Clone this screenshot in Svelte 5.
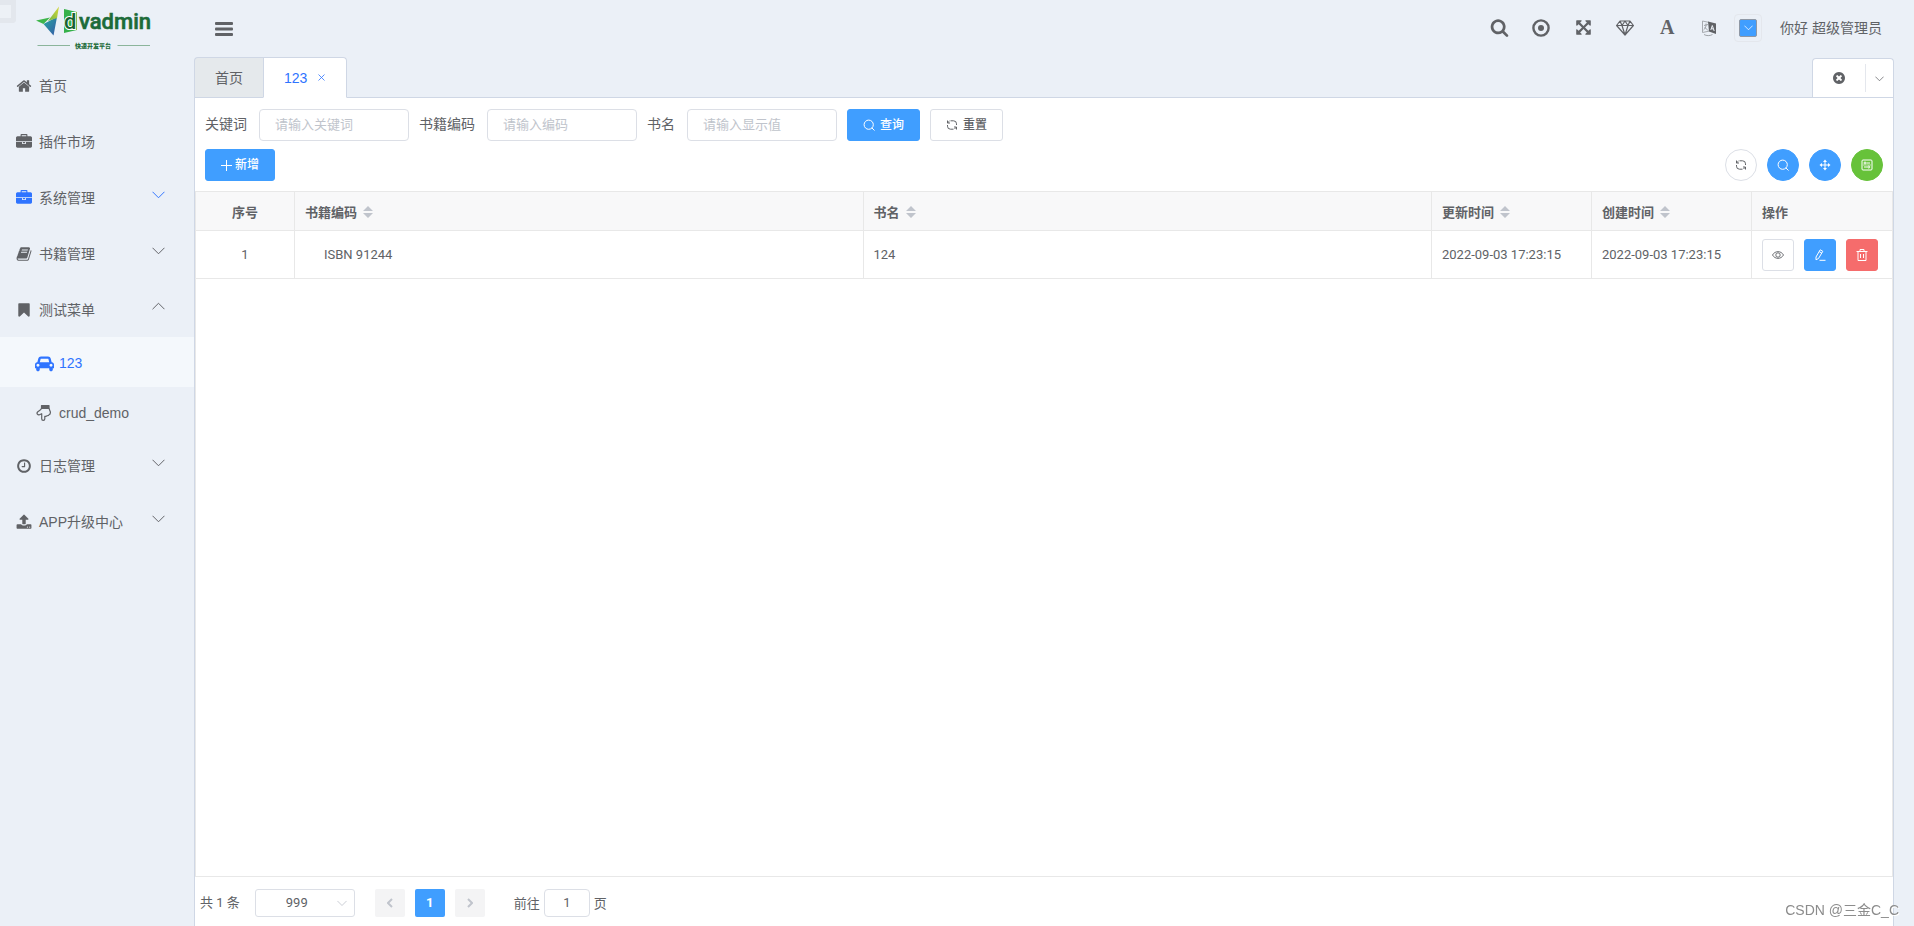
<script>
  const icons = {
    home: 'M1472 992v480q0 26-19 45t-45 19h-384v-384h-256v384h-384q-26 0-45-19t-19-45v-480q0-1 .5-3t.5-3l575-474 575 474q1 2 1 6zm223-69l-62 74q-8 9-21 11h-3q-13 0-21-7l-692-577-692 577q-12 8-24 7-13-2-21-11l-62-74q-8-10-7-23.5t11-21.5l719-599q32-26 76-26t76 26l244 204v-195q0-14 9-23t23-9h192q14 0 23 9t9 23v408l219 182q10 8 11 21.5t-7 23.5z',
    briefcase: 'M640 256h512v-128h-512v128zm1152 640v480q0 66-47 113t-113 47h-1472q-66 0-113-47t-47-113v-480h672v160q0 26 19 45t45 19h320q26 0 45-19t19-45v-160h672zm-768 0v128h-256v-128h256zm768-480v384h-1792v-384q0-66 47-113t113-47h352v-160q0-40 28-68t68-28h576q40 0 68 28t28 68v160h352q66 0 113 47t47 113z',
    book: 'M1703 478q40 57 18 129l-275 906q-19 64-76.5 107.5t-122.5 43.5h-923q-77 0-148.5-53.5t-99.5-131.5q-24-67-2-127 0-4 3-27t4-37q1-8-3-21.5t-3-19.5q2-11 8-21t16.5-23.5 16.5-23.5q23-38 45-91.5t30-91.5q3-10 .5-30t-.5-28q3-11 17-28t17-23q21-36 42-92t25-90q1-9-2.5-32t.5-28q4-13 22-30.5t22-22.5q19-26 42.5-84.5t27.5-96.5q1-8-3-25.5t-2-26.5q2-8 9-18t18-23 17-21q8-12 16.5-30.5t15-35 16-36 19.5-32 26.5-23.5 36-11.5 47.5 5.5l-1 3q38-9 51-9h761q74 0 114 56t18 130l-274 906q-36 119-71.5 153.5t-128.5 34.5h-869q-27 0-38 15-11 16-1 43 24 70 144 70h923q29 0 56-15.5t35-41.5l300-987q7-22 5-57 38 15 59 43zm-1064 2q-4 13 2 22.5t20 9.5h608q13 0 25.5-9.5t16.5-22.5l21-64q4-13-2-22.5t-20-9.5h-608q-13 0-25.5 9.5t-16.5 22.5zm-83 256q-4 13 2 22.5t20 9.5h608q13 0 25.5-9.5t16.5-22.5l21-64q4-13-2-22.5t-20-9.5h-608q-13 0-25.5 9.5t-16.5 22.5z',
    bookmark: 'M1420 128q23 0 44 9 33 13 52.5 41t19.5 62v1289q0 34-19.5 62t-52.5 41q-19 8-44 8-48 0-83-32l-441-424-441 424q-36 33-83 33-23 0-44-9-33-13-52.5-41t-19.5-62v-1289q0-34 19.5-62t52.5-41q21-9 44-9h1048z',
    clock: 'M1024 544v448q0 14-9 23t-23 9h-320q-14 0-23-9t-9-23v-64q0-14 9-23t23-9h224v-352q0-14 9-23t23-9h64q14 0 23 9t9 23zm416 352q0-148-73-273t-198-198-273-73-273 73-198 198-73 273 73 273 198 198 273 73 273-73 198-198 73-273zm224 0q0 209-103 385.5t-279.5 279.5-385.5 103-385.5-103-279.5-279.5-103-385.5 103-385.5 279.5-279.5 385.5-103 385.5 103 279.5 279.5 103 385.5z',
    upload: 'M1344 1472q0-26-19-45t-45-19-45 19-19 45 19 45 45 19 45-19 19-45zm256 0q0-26-19-45t-45-19-45 19-19 45 19 45 45 19 45-19 19-45zm128-224v320q0 40-28 68t-68 28h-1472q-40 0-68-28t-28-68v-320q0-40 28-68t68-28h427q21 56 70.5 92t110.5 36h256q61 0 110.5-36t70.5-92h427q40 0 68 28t28 68zm-325-648q-17 40-59 40h-256v448q0 26-19 45t-45 19h-256q-26 0-45-19t-19-45v-448h-256q-42 0-59-40-17-39 14-69l448-448q18-19 45-19t45 19l448 448q31 30 14 69z',
    car: 'M480 1088q0-66-47-113t-113-47-113 47-47 113 47 113 113 47 113-47 47-113zm36-320h1016l-89-357q-2-8-14-17.5t-21-9.5h-768q-9 0-21 9.5t-14 17.5zm1372 320q0-66-47-113t-113-47-113 47-47 113 47 113 113 47 113-47 47-113zm160-96v384q0 14-9 23t-23 9h-96v128q0 80-56 136t-136 56-136-56-56-136v-128h-1024v128q0 80-56 136t-136 56-136-56-56-136v-128h-96q-14 0-23-9t-9-23v-384q0-93 65.5-158.5t158.5-65.5h28l105-419q23-94 104-157.5t179-63.5h768q98 0 179 63.5t104 157.5l105 419h28q93 0 158.5 65.5t65.5 158.5z',
    search: 'M1216 832q0-185-131.5-316.5t-316.5-131.5-316.5 131.5-131.5 316.5 131.5 316.5 316.5 131.5 316.5-131.5 131.5-316.5zm512 832q0 52-38 90t-90 38q-54 0-90-38l-343-342q-179 124-399 124-143 0-273.5-55.5t-225-150-150-225-55.5-273.5 55.5-273.5 150-225 225-150 273.5-55.5 273.5 55.5 225 150 150 225 55.5 273.5q0 220-124 399l343 343q37 37 37 90z',
    arrows: 'M1411 541l-355 355 355 355 144-144q29-31 70-14 39 17 39 59v448q0 26-19 45t-45 19h-448q-42 0-59-40-17-39 14-69l144-144-355-355-355 355 144 144q31 30 14 69-17 40-59 40h-448q-26 0-45-19t-19-45v-448q0-42 40-59 39-17 69 14l144 144 355-355-355-355-144 144q-19 19-45 19-12 0-24-5-40-17-40-59v-448q0-26 19-45t45-19h448q42 0 59 40 17 39-14 69l-144 144 355 355 355-355-144-144q-31-30-14-69 17-40 59-40h448q26 0 45 19t19 45v448q0 42-39 59-13 5-25 5-26 0-45-19z',
    closeAll: 'M1277 1122q0-26-19-45l-181-181 181-181q19-19 19-45 0-27-19-46l-90-90q-19-19-46-19-26 0-45 19l-181 181-181-181q-19-19-45-19-27 0-46 19l-90 90q-19 19-19 46 0 26 19 45l181 181-181 181q-19 19-19 45 0 27 19 46l90 90q19 19 46 19 26 0 45-19l181-181 181 181q19 19 45 19 27 0 46-19l90-90q19-19 19-46zm387-226q0 209-103 385.5t-279.5 279.5-385.5 103-385.5-103-279.5-279.5-103-385.5 103-385.5 279.5-279.5 385.5-103 385.5 103 279.5 279.5 103 385.5z'
  };

  let menus = $state([
    { title: '首页', icon: 'home' },
    { title: '插件市场', icon: 'briefcase' },
    { title: '系统管理', icon: 'briefcase', parent: true, blue: true },
    { title: '书籍管理', icon: 'book', parent: true },
    {
      title: '测试菜单',
      icon: 'bookmark',
      parent: true,
      open: true,
      children: [
        { title: '123', icon: 'car', active: true },
        { title: 'crud_demo', icon: 'hand' }
      ]
    },
    { title: '日志管理', icon: 'clock', parent: true },
    { title: 'APP升级中心', icon: 'upload', parent: true }
  ]);

  const fields = [
    { id: 'keyword', label: '关键词', placeholder: '请输入关键词' },
    { id: 'code', label: '书籍编码', placeholder: '请输入编码' },
    { id: 'name', label: '书名', placeholder: '请输入显示值' }
  ];
  let form = $state({ keyword: '', code: '', name: '' });

  const rows = [
    { code: 'ISBN 91244', name: '124', updated: '2022-09-03 17:23:15', created: '2022-09-03 17:23:15' }
  ];
  let page = $state('1');

  function reset() {
    form = { keyword: '', code: '', name: '' };
  }
</script>

{#snippet fa(name, size)}
  <svg width={size} height={size} viewBox={name === 'car' ? '0 0 2048 1792' : '0 0 1792 1792'} fill="currentColor" aria-hidden="true">
    <path d={icons[name]} />
  </svg>
{/snippet}

{#snippet chevron(size)}
  <svg class="chevron" width={size} height={size} viewBox="0 0 12 12" fill="none" stroke="currentColor" aria-hidden="true">
    <path d="M.5 3.5 6 9l5.5-5.5" />
  </svg>
{/snippet}

{#snippet elSearch()}
  <svg width="12" height="12" viewBox="0 0 12 12" fill="none" stroke="currentColor" aria-hidden="true">
    <circle cx="5.7" cy="5.7" r="4.6" /><path d="m8.8 8.8 2.7 2.7" />
  </svg>
{/snippet}

{#snippet elRefresh()}
  <svg width="12" height="12" viewBox="0 0 12 12" fill="none" stroke="currentColor" aria-hidden="true">
    <path d="M4.500 1.800H7.500a3 3 0 0 1 3 3V6M7.500 10.200H4.500a3 3 0 0 1-3-3V6" />
    <path d="M1.500 1.500V4H4M1.700 3.800 3.500 2M10.500 10.500V8H8M10.300 8.200 8.500 10" />
  </svg>
{/snippet}

{#snippet sorter()}
  <button class="sort" aria-label="排序">
    <svg width="10" height="12" viewBox="0 0 10 12" fill="currentColor"><path d="M0 5l5-5 5 5zM0 7l5 5 5-5z" /></svg>
  </button>
{/snippet}

<div class="layout">
  <div class="ghost"></div>
  <aside>
    <a class="logo" href="#/" aria-label="dvadmin">
      <svg width="124" height="50" viewBox="32 0 124 50">
        <defs>
          <linearGradient id="wing" x1="0" y1="0" x2="1" y2="1">
            <stop offset="0" stop-color="#25a9a0" /><stop offset="1" stop-color="#3659a8" />
          </linearGradient>
          <linearGradient id="tip" x1="1" y1="0" x2="0" y2="1">
            <stop offset="0" stop-color="#d9d93c" /><stop offset="1" stop-color="#6fb544" />
          </linearGradient>
        </defs>
        <path d="M36 20.5 50 17.5 43.5 24z" fill="#3db54a" />
        <path d="M43.5 24 57 17 53.5 35.5z" fill="url(#wing)" />
        <path d="M59 6.5 57 18l-9 3z" fill="url(#tip)" />
        <path d="M64 9l13 3v18l-13 3z" fill="#35b14a" />
        <text x="64" y="29" class="brand" fill="#186334" stroke="#fff" stroke-width="2" paint-order="stroke">d</text>
        <text x="79" y="29" class="brand" fill="#1c6b39" stroke="#1c6b39" stroke-width=".6">vadmin</text>
        <path d="M37.500 45.500H70M117.500 45.500H150" stroke="#8bb59b" />
        <text x="75" y="48" class="slogan" fill="#1c6b39">快速开发平台</text>
      </svg>
    </a>
    <nav>
      {#each menus as menu}
        <a class="item" class:blue={menu.blue} class:open={menu.open} href="#/{menu.title}">
          <span class="glyph">{@render fa(menu.icon, 16)}</span>
          <span class="title">{menu.title}</span>
          {#if menu.parent}{@render chevron(13)}{/if}
        </a>
        {#if menu.open}
          {#each menu.children as child}
            <a class="item child" class:active={child.active} href="#/{child.title}">
              <span class="glyph">
                {#if child.icon === 'hand'}
                  <svg width="16" height="16" viewBox="0 0 16 16" fill="none" stroke="currentColor" stroke-width="1.2" stroke-linejoin="round">
                    <path d="M5.500.6h7.500v2.800H5.500z" fill="currentColor" />
                    <path d="M5.500 3.400C5 5 3.500 5.600 1.600 7c-1.400 1.400.2 3.400 1.900 2.700l2.200-1v5c0 2.200 3.100 2.200 3.100 0v-2.400c1 .4 1.800 0 2.300-.6 1 .2 1.600-.2 1.900-1 1-.3 1.500-1.200 1.400-2.700L13 3.400" />
                  </svg>
                {:else}
                  {@render fa(child.icon, 19)}
                {/if}
              </span>
              <span class="title">{child.title}</span>
            </a>
          {/each}
        {/if}
      {/each}
    </nav>
  </aside>

  <div class="main">
    <header>
      <button class="toggle" aria-label="折叠菜单">
        <svg width="18" height="14" viewBox="0 0 18 14" fill="currentColor"><rect width="18" height="3" rx="1" /><rect y="5.5" width="18" height="3" rx="1" /><rect y="11" width="18" height="3" rx="1" /></svg>
      </button>
      <div class="tools">
        <button aria-label="搜索">{@render fa('search', 19)}</button>
        <button aria-label="日志">
          <svg width="18" height="18" viewBox="0 0 18 18"><circle cx="9" cy="9" r="7.6" fill="none" stroke="currentColor" stroke-width="2.4" /><circle cx="9" cy="9" r="3" fill="currentColor" /></svg>
        </button>
        <button aria-label="全屏">{@render fa('arrows', 17)}</button>
        <button aria-label="主题">
          <svg width="18" height="16" viewBox="0 0 18 16" fill="none" stroke="currentColor" stroke-width="1.2" stroke-linejoin="round"><path d="M4 1h10l3.400 4.500L9 15 .6 5.500zM.6 5.500h16.800M4 1l2 4.500L9 15l3-9.500L14 1M6 5.500 9 1l3 4.500" /></svg>
        </button>
        <button class="letter" aria-label="字号">A</button>
        <button aria-label="语言">
          <svg width="16" height="18" viewBox="0 0 16 18" fill="none" stroke="currentColor"><path d="M8.500 3.500 1.500 2v11.500L8.500 12" stroke="#a6aaaf" /><path d="M7 2.500l8 2v10.500L8 12.500z" fill="currentColor" stroke="none" /><path d="M9.800 11 11.300 6.500 13.200 12M10.300 9.500l2.200.6" stroke="#ebf0f7" /><path d="M3 6.500 7 5.500M5 4.500c.5 3-1 5.500-2.500 6.500M3.500 8l3.500 3.500M3 15.500c2.500 1.500 6 1.500 8.500 0" stroke="#8b8f94" stroke-width=".8" /></svg>
        </button>
        <button class="color" aria-label="颜色"><span>{@render chevron(9)}</span></button>
        <span class="user">你好 超级管理员</span>
      </div>
    </header>

    <div class="tabs">
      <a class="tab" href="#/index">首页</a>
      <a class="tab current" href="#/123">
        123
        <svg width="7" height="7" viewBox="0 0 7 7" stroke="currentColor" stroke-width=".8"><path d="M.5.5l6 6M6.5.5l-6 6" /></svg>
      </a>
      <div class="tab-control">
        <button class="close" aria-label="关闭全部">{@render fa('closeAll', 14)}</button>
        <button class="more" aria-label="更多">{@render chevron(9)}</button>
      </div>
    </div>

    <main>
      <form class="search" onsubmit={(e) => e.preventDefault()}>
        {#each fields as field}
          <label for={field.id}>{field.label}</label>
          <input id={field.id} placeholder={field.placeholder} bind:value={form[field.id]} />
        {/each}
        <button class="btn primary">{@render elSearch()}查询</button>
        <button class="btn" type="button" onclick={reset}>{@render elRefresh()}重置</button>
      </form>

      <div class="actions">
        <button class="btn primary add">
          <svg width="11" height="11" viewBox="0 0 11 11" stroke="currentColor"><path d="M5.500 0v11M0 5.500h11" /></svg>新增
        </button>
        <div class="round">
          <button class="btn icon" aria-label="刷新">{@render elRefresh()}</button>
          <button class="btn icon primary" aria-label="查询">{@render elSearch()}</button>
          <button class="btn icon primary" aria-label="尺寸">
            <svg width="12" height="12" viewBox="0 0 12 12" fill="currentColor"><path d="M5.500 2h1v3.500H10v1H6.500V10h-1V6.500H2v-1h3.500zM6 .5 8 3H4zM6 11.500 4 9h4zM.5 6 3 4v4zM11.500 6 9 8V4z" /></svg>
          </button>
          <button class="btn icon success" aria-label="列设置">
            <svg width="12" height="12" viewBox="0 0 12 12" fill="none" stroke="currentColor"><rect x="1" y="1" width="10" height="10" rx="1" /><path d="M5.500 4H9M3 8h3.500" /><circle cx="4" cy="4" r="1" /><circle cx="7.8" cy="8" r="1" /><path d="M2 6h8" stroke-width=".6" /></svg>
          </button>
        </div>
      </div>

      <div class="grid">
        <table>
          <colgroup>
            <col class="c-index" /><col /><col /><col class="c-time" /><col class="c-time" /><col class="c-ops" />
          </colgroup>
          <thead>
            <tr>
              <th class="center">序号</th>
              <th>书籍编码{@render sorter()}</th>
              <th>书名{@render sorter()}</th>
              <th>更新时间{@render sorter()}</th>
              <th>创建时间{@render sorter()}</th>
              <th>操作</th>
            </tr>
          </thead>
          <tbody>
            {#each rows as row, i}
              <tr>
                <td class="center">{i + 1}</td>
                <td class="tree">{row.code}</td>
                <td>{row.name}</td>
                <td>{row.updated}</td>
                <td>{row.created}</td>
                <td>
                  <div class="ops">
                    <button class="btn icon" aria-label="查看">
                      <svg width="12" height="12" viewBox="0 0 12 12" fill="none" stroke="currentColor" stroke-width=".9"><path d="M.5 6C3 1.500 9 1.500 11.500 6 9 10.500 3 10.500.5 6z" /><circle cx="6" cy="6" r="2.200" /></svg>
                    </button>
                    <button class="btn icon primary" aria-label="编辑">
                      <svg width="12" height="12" viewBox="0 0 12 12" fill="none" stroke="currentColor"><path d="M6.200.8 8.800 2.300 4.500 9.500 2 10.800 2 8zM5.200 2.600l2.600 1.500M5.500 11.300h6" /></svg>
                    </button>
                    <button class="btn icon danger" aria-label="删除">
                      <svg width="12" height="12" viewBox="0 0 12 12" fill="none" stroke="currentColor"><path d="M.5 2.500h11M4 2.500v-2h4v2M2 2.500v9h8v-9M4.500 5v4M7.500 5v4" /></svg>
                    </button>
                  </div>
                </td>
              </tr>
            {/each}
          </tbody>
        </table>
      </div>

      <footer>
        <span class="total">共 1 条</span>
        <div class="select">
          <select aria-label="每页条数"><option>999</option></select>
          {@render chevron(10)}
        </div>
        <div class="pager">
          <button disabled aria-label="上一页"><svg width="6" height="10" viewBox="0 0 6 10" fill="none" stroke="currentColor" stroke-width="2"><path d="M5 1 1 5l4 4" /></svg></button>
          <button class="on">1</button>
          <button disabled aria-label="下一页"><svg width="6" height="10" viewBox="0 0 6 10" fill="none" stroke="currentColor" stroke-width="2"><path d="m1 1 4 4-4 4" /></svg></button>
        </div>
        <label class="jump">前往<input bind:value={page} />页</label>
      </footer>
    </main>
  </div>
  <div class="watermark">CSDN @三金C_C</div>
</div>

<style>
  :global(body) {
    background: #ebf0f7;
  }
  .layout {
    display: flex;
    min-height: 100vh;
    box-sizing: border-box;
    padding-right: 20px;
    color: #606266;
    font: 14px/20px "Liberation Sans", "Noto Sans CJK SC", sans-serif;
  }
  .layout :global(*) {
    box-sizing: border-box;
  }
  svg {
    display: block;
    flex: none;
  }
  a {
    color: inherit;
    text-decoration: none;
  }
  button {
    display: flex;
    align-items: center;
    justify-content: center;
    padding: 0;
    border: 0;
    background: none;
    color: inherit;
    font: inherit;
    cursor: pointer;
  }
  .ghost {
    position: absolute;
    top: 0;
    left: 0;
    width: 16px;
    height: 23px;
    border: 5px solid #e3e7ed;
    border-left: 0;
    border-radius: 0 0 4px 0;
    background: #edf1f6;
  }

  aside {
    flex: none;
    width: 194px;
  }
  .logo {
    display: block;
    height: 57px;
    padding-left: 32px;
  }
  .brand {
    font: 500 22px Roboto, sans-serif;
  }
  .slogan {
    font: 900 6px "Noto Sans CJK SC", sans-serif;
  }
  .item {
    display: flex;
    align-items: center;
    height: 56px;
    padding: 2px 29px 0 15px;
  }
  .glyph {
    display: flex;
    justify-content: center;
    width: 18px;
    margin-right: 6px;
  }
  .title {
    flex: 1;
  }
  .item .chevron {
    margin-bottom: 8px;
    stroke-width: .9;
  }
  .open .chevron {
    transform: rotate(180deg);
  }
  .blue svg {
    color: #2f74ff;
  }
  .child {
    height: 50px;
    padding-left: 35px;
  }
  .child.active {
    background: #f4f8fc;
    color: #2f74ff;
  }

  .main {
    display: flex;
    flex: 1;
    flex-direction: column;
    min-width: 0;
  }
  header {
    display: flex;
    align-items: center;
    justify-content: space-between;
    height: 57px;
    padding: 0 12px 0 21px;
  }
  .tools {
    display: flex;
    align-items: center;
    gap: 12px;
    padding-bottom: 2px;
  }
  .tools button {
    width: 30px;
    height: 30px;
  }
  .tools .letter {
    font: 700 20px "Liberation Serif", serif;
  }
  .tools .color {
    width: 28px;
    height: 28px;
    margin-left: -2px;
    border: 1px solid #e4e7ed;
    border-radius: 4px;
  }
  .color span {
    display: flex;
    align-items: center;
    justify-content: center;
    width: 18px;
    height: 18px;
    border: 1px solid #8f98a5;
    border-radius: 2px;
    background: #409eff;
    color: #fff;
  }
  .user {
    margin-left: 6px;
  }

  .tabs {
    display: flex;
    height: 41px;
    border-bottom: 1px solid #cfd7e5;
  }
  .tab {
    display: flex;
    align-items: center;
    height: 41px;
    padding: 0 20px;
    border: 1px solid #cfd7e5;
    border-right: 0;
    border-radius: 4px 0 0 0;
    background: #e5e9ec;
  }
  .tab.current {
    gap: 11px;
    border-right: 1px solid #cfd7e5;
    border-bottom-color: #fff;
    border-radius: 0 4px 0 0;
    padding-right: 21px;
    background: #fff;
    color: #2f74ff;
  }
  .tab-control {
    display: flex;
    align-items: center;
    width: 82px;
    margin: 1px 0 0 auto;
    border: 1px solid #cfd7e5;
    border-bottom: 0;
    border-radius: 4px 4px 0 0;
    background: #fff;
  }
  .close {
    flex: 1;
    height: 28px;
    border-right: 1px solid #e4e7ed;
  }
  .more {
    width: 27px;
  }

  main {
    display: flex;
    flex: 1;
    flex-direction: column;
    border: 1px solid #cfd7e5;
    border-width: 0 1px;
    background: #fff;
    font-family: Roboto, "Noto Sans CJK SC", sans-serif;
  }
  .search {
    display: flex;
    align-items: center;
    padding: 11px 10px 0;
  }
  .search label {
    margin-right: 12px;
    padding-bottom: 2px;
  }
  input {
    border: 1px solid #dcdfe6;
    border-radius: 4px;
    background: #fff;
    color: #606266;
    font: inherit;
    font-size: 13px;
    outline: 0;
  }
  .search input {
    width: 150px;
    height: 32px;
    margin-right: 10px;
    padding: 0 15px 2px;
  }
  input::placeholder {
    color: #c0c4cc;
  }
  .btn {
    gap: 5px;
    height: 32px;
    padding: 0 15px;
    border: 1px solid #dcdfe6;
    border-radius: 3px;
    background: #fff;
    font-size: 12px;
    font-weight: 500;
  }
  .search .btn {
    margin-right: 10px;
  }
  .btn.add {
    gap: 3px;
  }
  .btn.icon {
    width: 32px;
    padding: 0;
  }
  .primary {
    border-color: #409eff;
    background: #409eff;
    color: #fff;
  }
  .success {
    border-color: #67c23a;
    background: #67c23a;
    color: #fff;
  }
  .danger {
    border-color: #f56c6c;
    background: #f56c6c;
    color: #fff;
  }
  .actions {
    display: flex;
    justify-content: space-between;
    padding: 8px 10px 10px;
  }
  .round,
  .ops {
    display: flex;
    gap: 10px;
  }
  .round .btn {
    border-radius: 16px;
  }

  .grid {
    flex: 1;
    border: 1px solid #e8e8e8;
  }
  table {
    width: 100%;
    table-layout: fixed;
    border-collapse: separate;
    border-spacing: 0;
    font-size: 13px;
  }
  .c-index {
    width: 99px;
  }
  .c-time {
    width: 160px;
  }
  .c-ops {
    width: 140px;
  }
  th,
  td {
    height: 48px;
    padding: 0 10px;
    border-right: 1px solid #e8e8e8;
    border-bottom: 1px solid #e8e8e8;
    text-align: left;
  }
  th {
    height: 39px;
    padding-top: 4px;
    background: #f8f8f9;
    font-weight: 700;
  }
  td {
    padding-top: 1px;
  }
  th:last-child,
  td:last-child {
    padding-right: 0;
    border-right: 0;
  }
  td:last-child {
    padding-top: 0;
  }
  .center {
    text-align: center;
  }
  .tree {
    padding-left: 29px;
  }
  .sort {
    display: inline-flex;
    margin-left: 6px;
    color: #c0c4cc;
    vertical-align: -1px;
  }

  footer {
    display: flex;
    align-items: center;
    height: 49px;
    padding: 2px 5px 0;
    font-size: 13px;
  }
  .total {
    margin-right: 15px;
  }
  .select {
    display: grid;
    align-items: center;
    width: 100px;
    margin-right: 20px;
  }
  .select > :global(*) {
    grid-area: 1 / 1;
  }
  .select :global(svg) {
    justify-self: end;
    margin-right: 8px;
    color: #c0c4cc;
    pointer-events: none;
  }
  select {
    width: 100%;
    height: 28px;
    padding: 0 30px;
    border: 1px solid #dcdfe6;
    border-radius: 3px;
    background: #fff;
    color: inherit;
    font: inherit;
    appearance: none;
  }
  .pager {
    display: flex;
    gap: 10px;
    margin-right: 29px;
  }
  .pager button {
    width: 30px;
    height: 28px;
    border-radius: 2px;
    background: #f4f4f5;
    color: #c0c4cc;
  }
  .pager .on {
    background: #409eff;
    color: #fff;
    font-weight: 700;
  }
  .jump input {
    width: 46px;
    height: 28px;
    margin: 0 4px;
    text-align: center;
  }
  .watermark {
    position: fixed;
    right: 15px;
    bottom: 6px;
    color: #8c8c8c;
    text-shadow: 1px 1px 0 #fff;
  }
</style>
